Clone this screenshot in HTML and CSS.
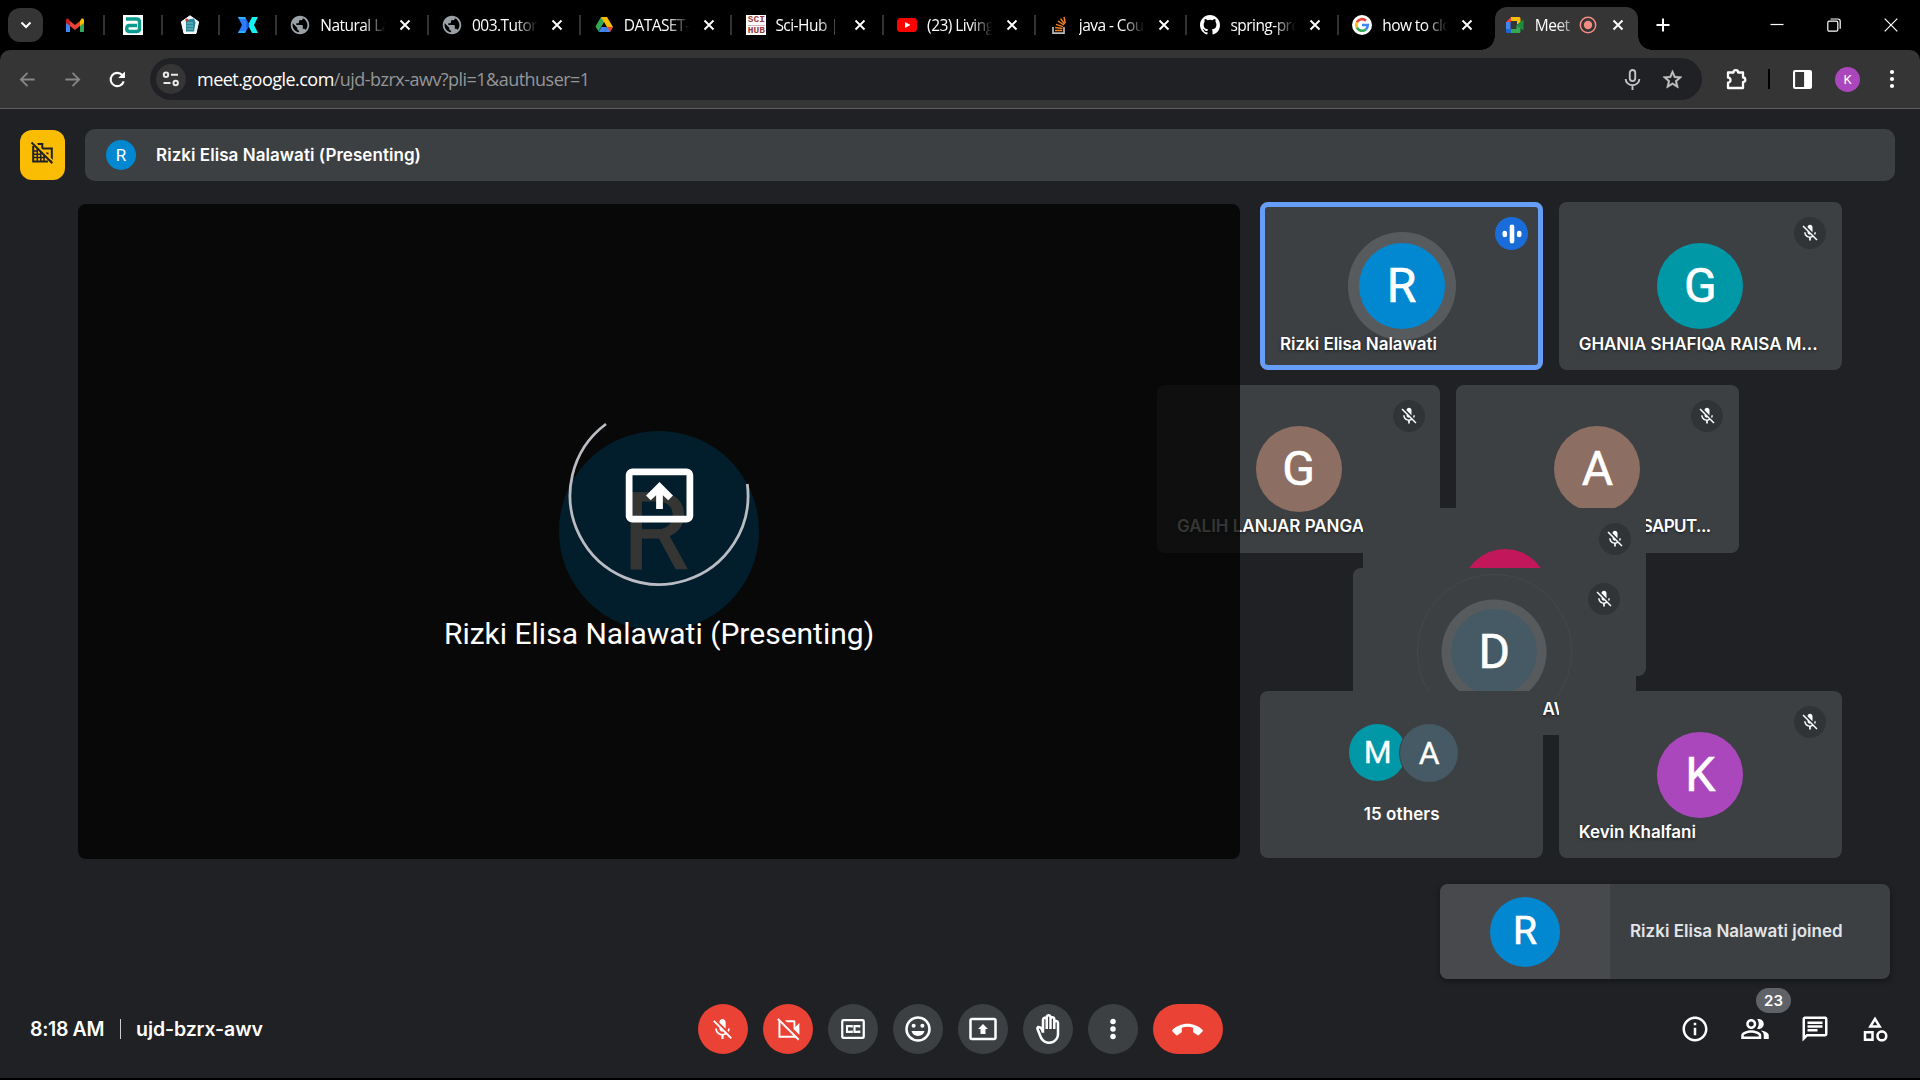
FILE: index.html
```html
<!DOCTYPE html>
<html lang="en">
<head>
<meta charset="utf-8">
<title>Meet</title>
<link rel="stylesheet" href="styles.css">
</head>
<body>
<svg class="defs" width="0" height="0">
  <symbol id="x" viewBox="0 0 12 12"><path d="M1.500 1.500l9 9M10.500 1.500l-9 9" fill="none" stroke="currentColor" stroke-width="1.900"/></symbol>
  <symbol id="globe" viewBox="1.200 1.200 21.600 21.600"><path fill="#9aa0a6" d="M12 2C6.480 2 2 6.480 2 12s4.480 10 10 10 10-4.480 10-10S17.520 2 12 2zm-1 17.930c-3.950-.49-7-3.850-7-7.930 0-.62.080-1.210.21-1.790L9 15v1c0 1.100.9 2 2 2v1.930zm6.900-2.540c-.26-.81-1-1.390-1.900-1.390h-1v-3c0-.55-.45-1-1-1H8v-2h2c.55 0 1-.45 1-1V7h2c1.100 0 2-.9 2-2v-.41c2.930 1.190 5 4.060 5 7.410 0 2.080-.8 3.970-2.100 5.390z"/></symbol>
  <symbol id="micoff" viewBox="0 0 24 24"><path d="M19 11h-1.700c0 .74-.16 1.430-.43 2.050l1.230 1.230c.56-.98.9-2.090.9-3.280zm-4.020.17c0-.06.02-.11.020-.17V5c0-1.660-1.340-3-3-3S9 3.340 9 5v.18l5.980 5.990zM4.270 3L3 4.270l6.010 6.010V11c0 1.660 1.330 3 2.990 3 .22 0 .44-.03.65-.08l1.660 1.660c-.71.33-1.500.52-2.310.52-2.760 0-5.300-2.100-5.300-5.100H5c0 3.410 2.720 6.230 6 6.720V21h2v-3.280c.91-.13 1.770-.45 2.540-.9L19.730 21 21 19.730 4.270 3z" fill="currentColor"/></symbol>
  <symbol id="present" viewBox="0 0 24 24"><path d="M20 4H4c-1.100 0-2 .9-2 2v12c0 1.100.9 2 2 2h16c1.100 0 2-.9 2-2V6c0-1.100-.9-2-2-2zm0 14H4V6h16v12zM8 12l1.400 1.400L11 11.900V16h2v-4.100l1.600 1.500L16 12l-4-4-4 4z" fill="currentColor"/></symbol>
</svg>

<header class="tabstrip">
  <button class="tab-search"><svg width="12" height="8" viewBox="0 0 12 8"><path d="M1.500 1.500L6 6l4.500-4.500" fill="none" stroke="#fff" stroke-width="2"/></svg></button>
  <div class="pin"><svg width="20" height="16" viewBox="0 0 20 16"><path d="M1 3v12h4V7z" fill="#4285f4"/><path d="M19 3v12h-4V7z" fill="#34a853"/><path d="M1 3.200V6l4 3V4L3.500 1.800C2 .8 1 1.800 1 3.200z" fill="#c5221f"/><path d="M5 4l5 4 5-4v5l-5 4-5-4z" fill="#ea4335"/><path d="M19 3.200V6l-4 3V4l1.500-2.200C18 .8 19 1.800 19 3.200z" fill="#fbbc04"/></svg></div>
  <div class="pin"><svg width="20" height="20" viewBox="0 0 20 20"><path fill="#fff" d="M0 0h20v20H0z"/><path d="M3 4h10.500q3 0 3 3v6.500q0 3-3 3H6.500q-2.800 0-2.800-3t2.800-3H14" fill="none" stroke="#0b9a8d" stroke-width="3.400"/></svg></div>
  <div class="pin"><svg width="20" height="20" viewBox="0 0 20 20"><path d="M10 .8l8.600 6L16 18.500H4L1.400 6.800z" fill="#eef6f8" stroke="#fff" stroke-linejoin="round"/><path d="M6 5l8-1.500 1.500 4L14 16.500H6z" fill="#2b8a9a"/><path d="M7 8h6M7 11h6M7 14h6" stroke="#78bcc6"/><circle cx="6.800" cy="5" r="1.500" fill="#d33"/></svg></div>
  <div class="pin"><svg width="20" height="16" viewBox="0 0 20 16"><path d="M0 0h7l4.500 8L7 16H0l4-8z" fill="#2f7bff"/><path d="M0 0h7l1 2H1zM0 16h7l1-2H1z" fill="#27b4ff"/><path d="M20 0h-6l-4 8 4 8h6l-4-8z" fill="#14f1f5"/><path d="M7 0l4.500 8L7 16l1.500-4V4z" fill="#0c59d8"/></svg></div>

  <div class="tab"><svg class="fav"><use href="#globe"/></svg><span class="title">Natural Lang</span><svg class="close"><use href="#x"/></svg></div>
  <div class="tab"><svg class="fav"><use href="#globe"/></svg><span class="title">003.Tutorial</span><svg class="close"><use href="#x"/></svg></div>
  <div class="tab"><svg class="fav" viewBox="0 0 20 20"><path d="M7 2h6l-3 5.200-5.500 9.300-3-5z" fill="#34a853"/><path d="M7 2h6l6 10h-6z" fill="#fbbc04"/><path d="M4.500 17l3-5H13l-2.500 5z" fill="#4285f4"/><path d="M13 12h6l-3.200 5h-5.500z" fill="#4285f4"/><path d="M13 12h6l-3 5z" fill="#ea4335"/></svg><span class="title">DATASET-S</span><svg class="close"><use href="#x"/></svg></div>
  <div class="tab"><span class="fav sci"><b>SCI</b><b>HUB</b></span><span class="title">Sci-Hub | A</span><svg class="close"><use href="#x"/></svg></div>
  <div class="tab"><svg class="fav" viewBox="0 0 20 20"><rect y="3" width="20" height="14" rx="3.500" fill="#f00"/><path d="M8 7l5.500 3L8 13z" fill="#fff"/></svg><span class="title">(23) Living</span><svg class="close"><use href="#x"/></svg></div>
  <div class="tab"><svg class="fav" viewBox="0 0 20 20"><path d="M4 12v6.200h11V12" fill="none" stroke="#bcbbbb" stroke-width="1.700"/><path d="M6 15.500h7.300M6.200 12.600l7.200.9M7 9.400l6.900 2.200M8.900 6l6 4M11.500 3.600l4.200 5.500M15 2l1.300 6" stroke="#f48024" stroke-width="1.500"/></svg><span class="title">java - Coun</span><svg class="close"><use href="#x"/></svg></div>
  <div class="tab"><svg class="fav" viewBox="0 0 16 16"><path fill="#fff" d="M8 0C3.580 0 0 3.580 0 8c0 3.540 2.290 6.530 5.470 7.590.4.070.55-.17.55-.38 0-.19-.01-.82-.01-1.490-2.010.37-2.530-.49-2.690-.94-.09-.23-.48-.94-.82-1.130-.28-.15-.68-.52-.01-.53.63-.01 1.080.58 1.230.82.72 1.210 1.870.87 2.330.66.07-.52.28-.87.51-1.070-1.780-.2-3.640-.89-3.640-3.950 0-.87.31-1.590.82-2.150-.08-.2-.36-1.020.08-2.120 0 0 .67-.21 2.200.82a7.600 7.600 0 014 0c1.530-1.040 2.200-.82 2.200-.82.44 1.100.16 1.920.08 2.120.51.56.82 1.270.82 2.150 0 3.070-1.870 3.750-3.650 3.950.29.25.54.73.54 1.480 0 1.070-.01 1.930-.01 2.200 0 .21.15.46.55.38A8 8 0 0016 8c0-4.420-3.580-8-8-8z"/></svg><span class="title">spring-proj</span><svg class="close"><use href="#x"/></svg></div>
  <div class="tab last"><svg class="fav" viewBox="0 0 20 20"><circle cx="10" cy="10" r="10" fill="#fff"/><g fill="none" stroke-width="2.600"><path d="M4.900 7.300A5.800 5.800 0 0 1 14 5.700" stroke="#ea4335"/><path d="M4.900 12.700a5.800 5.800 0 0 1 0-5.400" stroke="#fbbc05"/><path d="M13.800 14.400a5.800 5.800 0 0 1-8.900-1.700" stroke="#34a853"/><path d="M10 10h5.800a5.800 5.800 0 0 1-2 4.400" stroke="#4285f4"/></g></svg><span class="title">how to clon</span><svg class="close"><use href="#x"/></svg></div>
  <div class="tab active"><svg class="fav" viewBox="0 0 20 20"><path d="M1 7l5-5v5z" fill="#ea4335"/><path d="M6 2h8q1.500 0 1.500 1.500V7L12 10V6H6z" fill="#fbbc04"/><path d="M1 7h4.500v7H1z" fill="#4285f4"/><path d="M1 14h5v4H2.500Q1 18 1 16.500z" fill="#1967d2"/><path d="M6 14h5.500v-4l4 3v3.500q0 1.500-1.500 1.500H6z" fill="#34a853"/><path d="M11.500 10l7-5.500v11z" fill="#1e8e3e"/></svg><span class="title">Meet</span><svg class="rec" viewBox="0 0 18 18"><circle cx="9" cy="9" r="7.700" fill="none" stroke="#f28b82" stroke-width="1.500"/><circle cx="9" cy="9" r="4.200" fill="#f28b82"/></svg><svg class="close"><use href="#x"/></svg></div>
  <svg class="plus" viewBox="0 0 14 14"><path d="M7 .5v13M.5 7h13" stroke="#fff" stroke-width="2"/></svg>
  <div class="window-buttons">
    <svg viewBox="0 0 14 14"><path d="M.5 6.500h13" stroke="#fff" stroke-width="1.200"/></svg>
    <svg viewBox="0 0 14 14" fill="none" stroke="#fff" stroke-width="1.200"><rect x=".8" y="3.200" width="10" height="10" rx="1.500"/><path d="M3.500 1h7.500q2.200 0 2.200 2.200v7.600"/></svg>
    <svg viewBox="0 0 14 14"><path d="M.7.700l12.600 12.600M13.300.7L.7 13.300" stroke="#fff" stroke-width="1.200"/></svg>
  </div>
</header>

<div class="toolbar">
  <svg class="nav dim" viewBox="0 0 20 20"><path d="M17.500 10H3.500M10 3l-7 7 7 7" fill="none" stroke="currentColor" stroke-width="1.900"/></svg>
  <svg class="nav dim" viewBox="0 0 20 20"><path d="M2.500 10h14M10 3l7 7-7 7" fill="none" stroke="currentColor" stroke-width="1.900"/></svg>
  <svg class="nav" viewBox="0 0 20 20"><path d="M16.500 12a7 7 0 1 1-1.500-6.700" fill="none" stroke="#fff" stroke-width="2.200"/><path d="M17.800 1.500v7h-7z" fill="#fff"/></svg>
  <div class="omnibox">
    <span class="site"><svg width="18" height="16" viewBox="0 0 18 16" fill="none" stroke="#e8e8e8" stroke-width="2"><circle cx="4" cy="3.700" r="2.200"/><path d="M9 3.700h7M1.500 12h7"/><circle cx="13.700" cy="12" r="2.200"/></svg></span>
    <span class="url"><b>meet.google.com</b>/ujd-bzrx-awv?pli=1&amp;authuser=1</span>
    <svg class="omni-icon mic" viewBox="0 0 20 20" fill="none" stroke="#c4c4c4" stroke-width="1.800"><rect x="7.400" y="1" width="5.200" height="10.500" rx="2.600"/><path d="M3.500 9.500a6.500 6 0 0 0 13 0M10 15.500V20"/></svg>
    <svg class="omni-icon" viewBox="0 0 24 24"><path fill="#c4c4c4" stroke="#c4c4c4" stroke-width=".5" d="M22 9.240l-7.190-.62L12 2 9.190 8.630 2 9.240l5.460 4.730L5.820 21 12 17.270 18.180 21l-1.630-7.030L22 9.240zM12 15.400l-3.760 2.270 1-4.280-3.320-2.880 4.380-.38L12 6.100l1.710 4.040 4.380.38-3.320 2.880 1 4.280L12 15.400z"/></svg>
  </div>
  <svg class="ext" viewBox="0 0 22 22"><path d="M3 4.500h5.500a2.300 2.300 0 0 1 4.600 0H18v5a2.300 2.300 0 0 1 0 4.600V20H3v-5.300a2.500 2.500 0 0 0 0-5z" fill="none" stroke="#fff" stroke-width="2.300" stroke-linejoin="round"/></svg>
  <span class="divider"></span>
  <svg class="panel" viewBox="0 0 18 18"><rect x="1" y="1" width="16" height="16" rx="1" fill="none" stroke="#fff" stroke-width="2"/><path d="M10.500 1H17v16h-6.500z" fill="#fff"/></svg>
  <span class="profile">K</span>
  <svg class="menu" viewBox="0 0 6 20" fill="#fff"><circle cx="3" cy="3" r="2.100"/><circle cx="3" cy="10" r="2.100"/><circle cx="3" cy="17" r="2.100"/></svg>
</div>

<main class="meet">
  <div class="top">
    <span class="org"><svg width="24" height="24" viewBox="0 0 24 24" fill="none" stroke="#202124"><path d="M3.200 5v15.500H18" stroke-width="2"/><path d="M7.500 3h4.800v4.500h9.500v13" stroke-width="2"/><path d="M4 10h4M4 13.200h7M4 16.500h11M7.300 8v12M10.800 11v9M14 14v6" stroke-width="1.500"/><path d="M16 11.500h2.500v2H16z" fill="#202124" stroke="none"/><path d="M3.500.5l20 20" stroke="#fbbc04" stroke-width="1.500"/><path d="M1.500 1.500l20.800 20.800" stroke-width="2"/></svg></span>
    <div class="presenter"><span class="avatar blue tiny">R</span><span class="g w-pres">Rizki Elisa Nalawati (Presenting)</span></div>
  </div>

  <div class="stage">
    <section class="screen">
      <span class="screen-avatar">R</span>
      <div class="veil">
        <svg class="spinner" viewBox="0 0 190 190"><path d="M42 24A89 89 0 1 0 183.300 84" fill="none" stroke="#b9bcc2" stroke-width="2.800"/></svg>
        <svg class="cast"><use href="#present"/></svg>
        <p>Rizki Elisa Nalawati (Presenting)</p>
      </div>
    </section>
    <section class="rail">
      <div class="row">
        <article class="tile speaking"><span class="avatar blue ring">R</span><span class="badge talk"><svg width="20" height="20" viewBox="0 0 20 20" stroke="#fff" stroke-width="4.600" stroke-linecap="round"><path d="M2.800 9v2M10 2.800v14.400M17.200 9v2"/></svg></span><span class="name">Rizki Elisa Nalawati</span></article>
        <article class="tile"><span class="avatar teal">G</span><span class="badge"><svg><use href="#micoff"/></svg></span><span class="name">GHANIA SHAFIQA RAISA M...</span></article>
      </div>
      <div class="row shifted">
        <article class="tile"><span class="avatar brown">G</span><span class="badge"><svg><use href="#micoff"/></svg></span><span class="name">GALIH LANJAR PANGA</span></article>
        <article class="tile"><span class="avatar brown">A</span><span class="badge"><svg><use href="#micoff"/></svg></span><span class="name n-saput">SAPUT...</span></article>
      </div>
      <article class="tile moving-a"><span class="avatar pink"></span><span class="badge"><svg><use href="#micoff"/></svg></span></article>
      <article class="tile moving-b"><span class="halo"></span><span class="avatar slate ring">D</span><span class="badge"><svg><use href="#micoff"/></svg></span><span class="name n-raw">RAW</span></article>
      <div class="row bottom">
        <article class="tile others"><div class="pair"><span class="avatar teal">M</span><span class="avatar slate">A</span></div><span class="count">15 others</span></article>
        <article class="tile"><span class="avatar purple">K</span><span class="badge"><svg><use href="#micoff"/></svg></span><span class="name">Kevin Khalfani</span></article>
      </div>
    </section>
  </div>

  <aside class="toast"><div class="toast-pic"><span class="avatar blue">R</span></div><span class="g toast-text">Rizki Elisa Nalawati joined</span></aside>

  <footer class="controls">
    <div class="clock g"><span class="time">8:18 AM</span><i></i><span class="code">ujd-bzrx-awv</span></div>
    <div class="buttons">
      <button class="red"><svg width="25" height="25"><use href="#micoff"/></svg></button>
      <button class="red"><svg width="26" height="26" viewBox="0 0 24 24"><path fill="#fff" d="M3.300 2L2 3.300l1.200 1.200V20h15.500l2.500 2.500 1.300-1.300zM5 18.200V6.300L16.900 18.200zM9.200 4l1.800 1.800h6.100v6.100l5.400 5.400V6.500l-3.700 3.700V5q0-1-1-1z"/></svg></button>
      <button><svg width="30" height="30" viewBox="0 0 24 24" fill="none" stroke="#fff"><rect x="3.400" y="4.900" width="17.200" height="14.200" rx="1" stroke-width="1.800"/><path d="M11 10.800V9.700H7.200v4.600H11v-1.100M17 10.800V9.700h-3.800v4.600H17v-1.100" stroke-width="1.700"/></svg></button>
      <button><svg width="30" height="30" viewBox="0 0 24 24"><circle cx="12" cy="12" r="9.200" fill="none" stroke="#fff" stroke-width="2"/><circle cx="8.500" cy="9.300" r="1.600" fill="#fff"/><circle cx="15.500" cy="9.300" r="1.600" fill="#fff"/><path d="M6.800 13.600h10.400a5.400 5.400 0 0 1-10.400 0z" fill="#fff"/></svg></button>
      <button><svg width="30" height="30" viewBox="0 0 24 24"><path d="M21 3H3c-1.110 0-2 .89-2 2v14c0 1.110.89 2 2 2h18c1.110 0 2-.89 2-2V5c0-1.110-.89-2-2-2zm0 16H3V5h18v14zM10 12H8l4-4 4 4h-2v4h-4v-4z" fill="#fff"/></svg></button>
      <button><svg width="30" height="30" viewBox="0 0 24 24"><path fill="#fff" d="M21 7c0-1.380-1.120-2.500-2.500-2.500-.17 0-.34.020-.5.050V4c0-1.380-1.120-2.500-2.500-2.500-.23 0-.46.030-.67.090C14.460.66 13.560 0 12.500 0c-1.230 0-2.250.89-2.460 2.060C9.870 2.020 9.690 2 9.500 2 8.120 2 7 3.120 7 4.500v5.890c-.34-.31-.76-.54-1.220-.66L5.010 9.520c-.83-.23-1.700.09-2.190.83-.38.570-.4 1.310-.15 1.950l2.560 6.430C6.490 21.910 9.570 24 13 24c4.420 0 8-3.580 8-8V7zm-2 9c0 3.310-2.690 6-6 6-2.610 0-4.950-1.590-5.910-4.010l-2.600-6.540.53.140c.46.120.83.460 1 .9L7 15h2V4.500c0-.28.22-.5.500-.5s.5.220.5.500V12h2V2.500c0-.28.22-.5.500-.5s.5.220.5.500V12h2V4c0-.28.22-.5.500-.5s.5.220.5.500v8h2V7c0-.28.22-.5.500-.5s.5.220.5.500v9z"/></svg></button>
      <button><svg width="30" height="30" viewBox="0 0 24 24" fill="#fff"><circle cx="12" cy="6" r="2.200"/><circle cx="12" cy="12" r="2.200"/><circle cx="12" cy="18" r="2.200"/></svg></button>
      <button class="red hang"><svg width="31" height="31" viewBox="0 0 24 24"><path fill="#fff" d="M12 7.500C7.500 7.500 3.400 9.300.4 12.200c-.4.400-.4 1 0 1.400l2.700 2.700c.4.400 1 .4 1.400 0 .8-.7 1.700-1.300 2.600-1.800.3-.2.500-.5.500-.9v-3c1.400-.5 2.900-.7 4.400-.7s3 .2 4.400.7v3c0 .4.200.7.500.9.900.5 1.800 1.100 2.600 1.800.4.400 1 .4 1.400 0l2.700-2.700c.4-.4.400-1 0-1.400C20.600 9.300 16.500 7.500 12 7.500z"/></svg></button>
    </div>
    <div class="side">
      <svg viewBox="0 0 24 24"><path fill="#fff" d="M11 7h2v2h-2zm0 4h2v6h-2zm1-9C6.480 2 2 6.480 2 12s4.480 10 10 10 10-4.480 10-10S17.520 2 12 2zm0 18c-4.410 0-8-3.590-8-8s3.590-8 8-8 8 3.590 8 8-3.590 8-8 8z"/></svg>
      <span class="people"><svg viewBox="0 0 24 24"><path fill="#fff" d="M15 8c0-1.420-.5-2.730-1.330-3.760.42-.14.860-.24 1.330-.24 2.210 0 4 1.790 4 4s-1.790 4-4 4c-.43 0-.84-.09-1.230-.21-.03-.01-.06-.02-.1-.03A5.980 5.980 0 0 0 15 8zm1.660 5.130C18.030 14.060 19 15.320 19 17v3h4v-3c0-2.180-3.580-3.470-6.340-3.870zM9 6c-1.100 0-2 .9-2 2s.9 2 2 2 2-.9 2-2-.9-2-2-2m0 9c-2.700 0-5.800 1.290-6 2.010V18h12v-1c-.2-.71-3.300-2-6-2M9 4c2.210 0 4 1.790 4 4s-1.790 4-4 4-4-1.790-4-4 1.790-4 4-4zm0 9c2.670 0 8 1.340 8 4v3H1v-3c0-2.660 5.330-4 8-4z"/></svg><b>23</b></span>
      <svg viewBox="0 0 24 24"><path fill="#fff" d="M4 4h16v12H5.170L4 17.170V4m0-2c-1.100 0-1.990.9-1.990 2L2 22l4-4h14c1.100 0 2-.9 2-2V4c0-1.100-.9-2-2-2H4zm2 10h8v2H6v-2zm0-3h12v2H6V9zm0-3h12v2H6V6z"/></svg>
      <svg viewBox="0 0 24 24"><path fill="#fff" d="M12 2l-5.500 9h11L12 2zm0 3.840L13.930 9h-3.870L12 5.840zM17.500 13c-2.490 0-4.500 2.010-4.500 4.500s2.010 4.500 4.500 4.500 4.500-2.010 4.500-4.500-2.010-4.500-4.500-4.500zm0 7a2.500 2.500 0 0 1 0-5 2.500 2.500 0 0 1 0 5zM3 21.500h8v-8H3v8zm2-6h4v4H5v-4z"/></svg>
    </div>
  </footer>
</main>
</body>
</html>
```
FILE: styles.css
```css
* { box-sizing: border-box; }
body { margin: 0; width: 1920px; height: 1080px; overflow: hidden; background: #000; color: #fff; font-family: Roboto, "Liberation Sans", sans-serif; display: flex; flex-direction: column; }
button { border: 0; padding: 0; color: #fff; display: flex; align-items: center; justify-content: center; }
svg { display: block; flex: none; }
.defs { position: absolute; }

/* browser tabs */
.tabstrip { height: 50px; flex: none; display: flex; align-items: center; padding-left: 8px; }
.tab-search { width: 35px; height: 34px; border-radius: 12px; background: #353535; margin-right: 4.800px; }
.pin { width: 57.400px; height: 20px; flex: none; display: flex; align-items: center; justify-content: center; border-right: 2px solid #333; }
.tab { width: 151.700px; height: 20px; flex: none; display: flex; align-items: center; padding-left: 13px; border-right: 2px solid #333; font: 15.500px "Open Sans", "Noto Sans", sans-serif; letter-spacing: -.55px; }
.fav { width: 20px; height: 20px; margin-right: 10px; flex: none; }
.title { width: 67px; flex: none; height: 24px; line-height: 24px; overflow: hidden; white-space: nowrap; -webkit-mask-image: linear-gradient(90deg, #000 65%, transparent 98%); mask-image: linear-gradient(90deg, #000 65%, transparent 98%); }
.close { width: 12px; height: 12px; margin-left: 12px; }
.sci { width: 20px; margin: 0 9px 0 1px; background: #fff; color: #963b3b; display: flex; flex-direction: column; justify-content: space-between; align-items: center; font: 9.500px/9.500px "Liberation Mono", monospace; letter-spacing: 0; }
.sci b + b { border-top: 1px solid #d9b5b5; }
.tab.last { border-color: transparent; }
.tab.active { position: relative; width: 143px; height: 43px; align-self: flex-end; margin-left: 4px; padding: 0 0 7px 10px; background: #353535; border: 0; border-radius: 12px 12px 0 0; }
.tab.active::before, .tab.active::after { content: ""; position: absolute; bottom: 0; width: 14px; height: 14px; }
.tab.active::before { left: -14px; background: radial-gradient(circle at 0 0, transparent 13.500px, #353535 14px); }
.tab.active::after { right: -14px; background: radial-gradient(circle at 100% 0, transparent 13.500px, #353535 14px); }
.tab.active .title { width: 36px; -webkit-mask-image: linear-gradient(90deg, #000 60%, #0007); mask-image: linear-gradient(90deg, #000 60%, #0007); }
.rec { width: 18px; height: 18px; margin-left: 8px; }
.tab.active .close { margin-left: 15px; }
.plus { width: 14px; height: 14px; margin-left: 18px; }
.window-buttons { margin-left: auto; display: flex; gap: 43px; padding-right: 22px; }
.window-buttons svg { width: 14px; height: 14px; }

/* address bar */
.toolbar { height: 59px; flex: none; display: flex; align-items: center; background: #353535; border-bottom: 1px solid #5e5e5e; border-radius: 10px 10px 0 0; padding-left: 18px; }
.nav { width: 19px; height: 19px; margin-right: 26px; }
.dim { color: #868686; }
.omnibox { width: 1552px; height: 42px; margin-left: -3px; border-radius: 21px; background: #202124; display: flex; align-items: center; padding: 0 18px 0 6px; }
.site { width: 30px; height: 30px; border-radius: 50%; background: #353535; display: flex; align-items: center; justify-content: center; }
.url { margin-left: 11px; font: 18px "Open Sans", "Noto Sans", sans-serif; color: #949699; letter-spacing: -.53px; }
.url b { font-weight: 400; color: #fff; }
.omni-icon { width: 23px; height: 23px; margin-left: 18px; }
.omni-icon.mic { width: 21px; height: 21px; margin-left: auto; }
.ext { width: 22px; height: 22px; margin-left: 23px; }
.divider { width: 2px; height: 20px; background: #000; margin-left: 21px; }
.panel { width: 19px; height: 19px; margin-left: 23px; }
.profile { width: 25px; height: 25px; border-radius: 50%; background: #ab47bc; font-size: 13px; line-height: 25px; text-align: center; margin-left: 23px; }
.menu { width: 6px; height: 20px; margin-left: 29px; }

/* call page */
.meet { position: relative; height: 969px; flex: none; background: #202124; display: flex; flex-direction: column; }
.g, .name, .count { font-family: Inter, Roboto, sans-serif; font-weight: 600; font-size: 17px; letter-spacing: -.03px; white-space: nowrap; }
.g.w-pres { letter-spacing: .05px; }
.top { display: flex; align-items: center; gap: 20px; padding: 20px 25px 0 20px; height: 72px; flex: none; }
.org { width: 45px; height: 50px; border-radius: 12px; background: #fbbc04; display: flex; align-items: center; justify-content: center; flex: none; padding: 0 2px 4px 0; }
.presenter { flex: 1; height: 52px; border-radius: 10px; background: #3c4043; display: flex; align-items: center; gap: 20px; padding-left: 21px; }

.avatar { width: 86px; height: 86px; border-radius: 50%; display: flex; align-items: center; justify-content: center; font-size: 48px; line-height: 1; padding-bottom: 1px; -webkit-text-stroke: .6px #fff; flex: none; }
.avatar.tiny { width: 30px; height: 30px; font-size: 17px; -webkit-text-stroke: 0; padding: 0; }
.blue { background: #0288d1; }
.teal { background: #0097a7; }
.brown { background: #8d6e63; }
.pink { background: #c2185b; }
.slate { background: #455a64; }
.purple { background: #ab47bc; }
.ring { box-shadow: 0 0 0 11px #585b5e; }
.moving-b .ring { box-shadow: 0 0 0 9.500px #585b5e; }

.stage { display: flex; gap: 20px; padding: 21px 0 0 78px; flex: none; }
.screen { position: relative; z-index: 2; width: 1162px; height: 655px; margin-top: 2px; border-radius: 8px; display: flex; align-items: center; justify-content: center; overflow: hidden; }
.screen-avatar { width: 200px; height: 200px; margin-bottom: 2px; padding-right: 7px; border-radius: 50%; background: #0288d1; font-size: 108px; -webkit-text-stroke: 1px #fff; line-height: 203px; text-align: center; }
.veil { position: absolute; inset: 0; background: rgba(2, 2, 1, .8); display: flex; flex-direction: column; align-items: center; padding-top: 196px; }
.spinner { width: 190px; height: 190px; }
.cast { width: 81px; height: 81px; margin-top: -135px; }
.veil p { margin: 77.500px 0 0; font-size: 30px; line-height: 40px; }

.rail { position: relative; height: 656px; width: 582px; display: flex; flex-direction: column; gap: 15px; }
.row { display: flex; gap: 15.400px; }
.shifted { margin-left: -103px; }
.bottom { position: relative; margin-top: auto; }
.tile { position: relative; flex: none; width: 283.300px; height: 168px; border-radius: 8px; background: #3c4043; display: flex; justify-content: center; padding-top: 41px; }
.bottom .tile { height: 167px; }
.speaking::after { content: ""; position: absolute; inset: 0; border: 5px solid #669df6; border-radius: 8px; }
.badge { position: absolute; top: 15px; right: 15.500px; width: 32px; height: 32px; border-radius: 50%; background: #303437; display: flex; align-items: center; justify-content: center; }
.badge svg { width: 20px; height: 20px; }
.talk { background: #1a6dd9; width: 33px; height: 33px; right: 15px; }
.name { position: absolute; left: 20px; bottom: 14px; line-height: 24px; text-shadow: 0 1px 3px rgba(0, 0, 0, .6); }
.moving-a { position: absolute; left: 103px; top: 306px; }
.moving-b { position: absolute; left: 92.500px; top: 366px; height: 167px; }
.halo { position: absolute; left: 64px; top: 6px; width: 155px; height: 155px; border-radius: 50%; border: 1.500px solid #44484b; }
.shifted .name { bottom: 15px; }
.name.n-saput { left: 186px; letter-spacing: -.6px; }
.name.n-raw { left: 179px; }
.others { flex-direction: column; align-items: center; justify-content: flex-start; padding-top: 33px; }
.pair { display: flex; margin-left: 5px; }
.pair .avatar { width: 57px; height: 57px; font-size: 32px; -webkit-text-stroke: .3px #fff; }
.pair .avatar + .avatar { width: 60px; height: 60px; margin: -1px 0 0 -7px; border: 1.500px solid #3c4043; }
.count { margin-top: 17px; line-height: 28px; letter-spacing: .1px; }

.toast { position: absolute; left: 1440px; top: 775px; width: 450px; height: 95px; border-radius: 8px; background: #3c4043; display: flex; align-items: center; overflow: hidden; box-shadow: 0 2px 6px rgba(0, 0, 0, .4); }
.toast-pic { width: 170px; height: 95px; background: #48494c; display: flex; align-items: center; justify-content: center; }
.toast-pic .avatar { width: 70px; height: 70px; font-size: 39px; padding: 0; }
.g.toast-text { margin: -1px 0 0 20px; color: #e3e5e8; letter-spacing: .02px; }

.controls { margin-top: auto; height: 98px; display: grid; grid-template-columns: 1fr 525px 1fr; align-items: center; padding: 0 30px; }
.g.clock { display: flex; align-items: center; font-size: 19.500px; letter-spacing: -.35px; }
.code { letter-spacing: -.1px; }
.clock i { width: 1px; height: 20px; background: #ccc; margin: 0 15px 0 16px; }
.buttons { display: flex; gap: 15px; }
.buttons button { width: 50px; height: 50px; border-radius: 25px; background: #3c4043; flex: none; }
.buttons button.red { background: #ea4335; }
.buttons button.hang { width: 70px; }
.side { display: flex; justify-content: flex-end; gap: 30px; }
.side svg { width: 30px; height: 30px; }
.people { position: relative; }
.people b { position: absolute; left: 16px; top: -26px; width: 35px; height: 25px; border-radius: 13px; background: #5f6368; font: 600 15px/25px Inter, sans-serif; text-align: center; }
```
